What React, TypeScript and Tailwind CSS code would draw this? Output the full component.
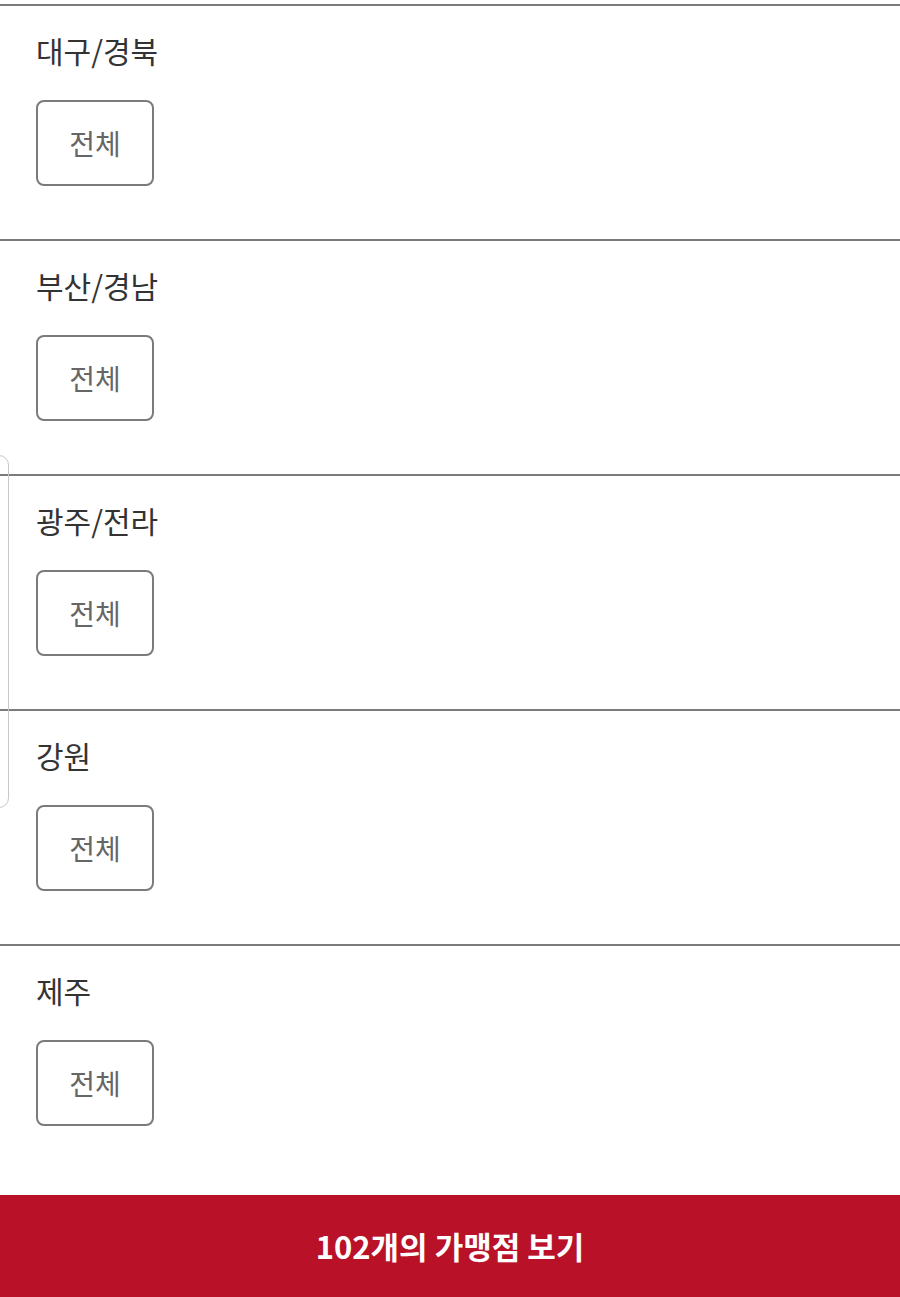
const regions = ['대구/경북', '부산/경남', '광주/전라', '강원', '제주'];

function RegionSection({ name }: { name: string }) {
  return (
    <section className="border-t-2 border-[#7b7b7b] pl-[36px] pt-[24px] pb-[53px]">
      <h3 className="text-[30px] leading-[40px] text-[#333333] font-normal">{name}</h3>
      <button
        type="button"
        className="mt-[30px] w-[118px] h-[86px] rounded-[8px] border-2 border-[#7b7b7b] bg-white text-[28px] text-[#666666] flex items-center justify-center"
      >
        전체
      </button>
    </section>
  );
}

export default function App() {
  return (
    <div
      className="relative w-[900px] min-h-[1297px] bg-white overflow-hidden pt-[4px]"
      style={{ fontFamily: '"Noto Sans CJK KR", "Noto Sans", sans-serif' }}
    >
      {regions.map((r) => (
        <RegionSection key={r} name={r} />
      ))}

      {/* 왼쪽 가장자리 겹친 패널 */}
      <div className="absolute left-[-20px] top-[455px] w-[29px] h-[353px] rounded-[10px] border border-[#c8c8c8] pointer-events-none" />

      <div className="mt-[16px] h-[102px] bg-[#b91228] flex items-center justify-center">
        <span className="text-[31px] font-bold text-white">102개의 가맹점 보기</span>
      </div>
    </div>
  );
}
